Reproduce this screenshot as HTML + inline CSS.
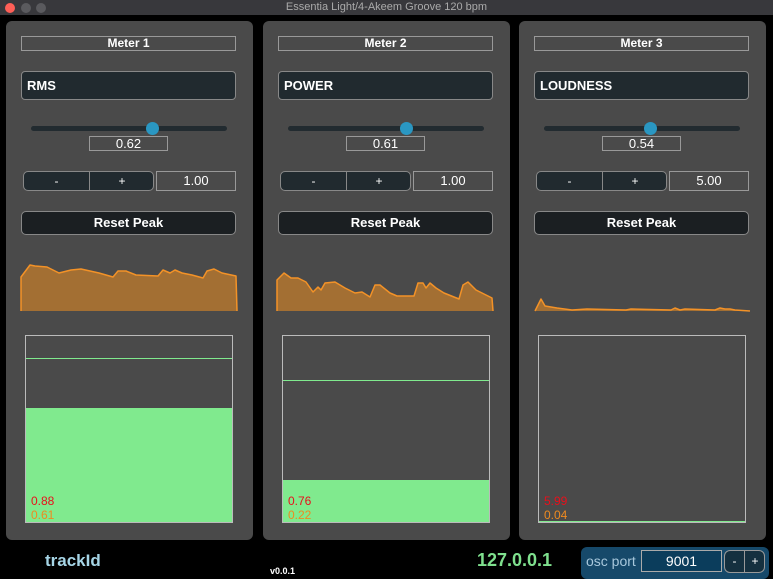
<!DOCTYPE html>
<html><head><meta charset="utf-8"><style>
*{margin:0;padding:0;box-sizing:border-box}
body{width:773px;height:576px;background:#000;position:relative;overflow:hidden;font-family:"Liberation Sans",sans-serif;color:#fff}
.tb{position:absolute;left:0;top:0;width:773px;height:15px;background:#38383c;color:#aaa;font-size:11px;text-align:center;line-height:15px}
.dot{position:absolute;top:3px;width:10px;height:10px;border-radius:50%;background:#5a5a5e}
.p{position:absolute;top:21px;width:247px;height:519px;background:#4a4a4a;border-radius:6px}
.p>div{position:absolute}
.lab{left:15px;top:15px;width:215px;height:15px;border:1px solid #999;font-size:12px;font-weight:bold;text-align:center;line-height:13px}
.name{left:15px;top:50px;width:215px;height:29px;border:1px solid #888;border-radius:4px;background:#212a2f;font-size:13px;font-weight:bold;line-height:27px;padding-left:5px}
.trk{left:25px;top:105px;width:196px;height:5px;border-radius:3px;background:#222b30}
.knob{top:101px;width:13px;height:13px;border-radius:50%;background:#2a97c2}
.val{left:83px;top:115px;width:79px;height:15px;border:1px solid #999;font-size:13px;text-align:center;line-height:13px}
.grp{left:17px;top:150px;width:131px;height:20px;border:1px solid #888;border-radius:5px;background:#212a2f;font-size:12px;line-height:18px}
.grp span{position:absolute;top:0;text-align:center}
.v2{left:150px;top:150px;width:80px;height:20px;border:1px solid #999;font-size:13px;text-align:center;line-height:18px}
.rst{left:15px;top:190px;width:215px;height:24px;border:1px solid #888;border-radius:5px;background:#1b1f22;font-size:13px;font-weight:bold;text-align:center;line-height:22px}
.mb{left:19px;top:314px;width:208px;height:188px;border:1px solid #bbb}
.fill{position:absolute;left:0;right:0;bottom:0;background:#80ea8e}
.ln{position:absolute;left:0;right:0;height:1px;background:#80ea8e}
.r{position:absolute;left:5px;font-size:12px;color:#e8101c}
.o{position:absolute;left:5px;font-size:12px;color:#ee8a20}
</style></head><body>
<div class="tb">Essentia Light/4-Akeem Groove 120 bpm</div>
<div class="dot" style="left:5px;background:#fe5f57"></div><div class="dot" style="left:21px"></div><div class="dot" style="left:36px"></div>

<div class="p" style="left:6px">
<div class="lab">Meter 1</div><div class="name">RMS</div>
<div class="trk"></div><div class="knob" style="left:140px"></div>
<div class="val">0.62</div>
<div class="grp"><span style="left:0;width:66px;border-right:1px solid #888">-</span><span style="left:66px;width:64px">+</span></div>
<div class="v2">1.00</div><div class="rst">Reset Peak</div>
<div class="mb"><div class="ln" style="top:22px"></div><div class="fill" style="top:72px"></div><div class="r" style="top:158px">0.88</div><div class="o" style="top:172px">0.61</div></div>
</div>

<div class="p" style="left:263px">
<div class="lab">Meter 2</div><div class="name">POWER</div>
<div class="trk"></div><div class="knob" style="left:137px"></div>
<div class="val">0.61</div>
<div class="grp"><span style="left:0;width:66px;border-right:1px solid #888">-</span><span style="left:66px;width:64px">+</span></div>
<div class="v2">1.00</div><div class="rst">Reset Peak</div>
<div class="mb"><div class="ln" style="top:44px"></div><div class="fill" style="top:144px"></div><div class="r" style="top:158px">0.76</div><div class="o" style="top:172px">0.22</div></div>
</div>

<div class="p" style="left:519px">
<div class="lab">Meter 3</div><div class="name">LOUDNESS</div>
<div class="trk"></div><div class="knob" style="left:125px"></div>
<div class="val">0.54</div>
<div class="grp"><span style="left:0;width:66px;border-right:1px solid #888">-</span><span style="left:66px;width:64px">+</span></div>
<div class="v2">5.00</div><div class="rst">Reset Peak</div>
<div class="mb"><div class="fill" style="height:1px"></div><div class="r" style="top:158px">5.99</div><div class="o" style="top:172px">0.04</div></div>
</div>

<svg style="position:absolute;left:0;top:0" width="773" height="576">
<g fill="#a36f33" stroke="#f39227" stroke-width="1.5" stroke-linejoin="round">
<polyline points="21,311 21,277 30,265 35,266 47,267 59,273 71,270 81,269 99,273 113,277 118,271 126,271 136,275 158,276 163,270 170,273 175,270 182,273 192,275 203,278 207,271 214,269 222,273 236,276 237,311"/>
<polyline points="277,311 277,280 284,273 291,278 298,278 306,282 313,292 318,287 321,290 325,283 335,282 345,288 355,293 362,292 370,297 375,285 380,285 390,293 397,296 414,296 418,283 423,283 426,288 430,283 436,288 444,293 459,299 463,285 468,282 476,290 486,295 492,298 493,311"/>
<polyline points="535,311 541,299 545,306 557,308 572,310 587,309 626,310 631,309 671,310 675,308 680,310 685,309 715,310 720,308 725,309 730,309 735,310 750,311"/>
</g></svg>

<div style="position:absolute;left:45px;top:551px;font-size:17px;font-weight:bold;color:#a6d5e6">trackId</div>
<div style="position:absolute;left:270px;top:566px;font-size:9px;font-weight:bold">v0.0.1</div>
<div style="position:absolute;left:477px;top:550px;font-size:18px;font-weight:bold;color:#7fe08e">127.0.0.1</div>
<div style="position:absolute;left:581px;top:547px;width:188px;height:32px;background:#16496a;border-radius:6px">
<div style="position:absolute;left:5px;top:6px;font-size:14px;color:#a8c8dc">osc port</div>
<div style="position:absolute;left:60px;top:3px;width:81px;height:22px;border:1px solid #aaa;background:#0b3d5c;font-size:14px;text-align:center;line-height:20px">9001</div>
<div style="position:absolute;left:143px;top:3px;width:41px;height:23px;border:1px solid #999;border-radius:6px;background:#15303f;font-size:12px;line-height:21px"><span style="position:absolute;left:0;width:20px;text-align:center;border-right:1px solid #999">-</span><span style="position:absolute;left:20px;width:20px;text-align:center">+</span></div>
</div>
</body></html>
